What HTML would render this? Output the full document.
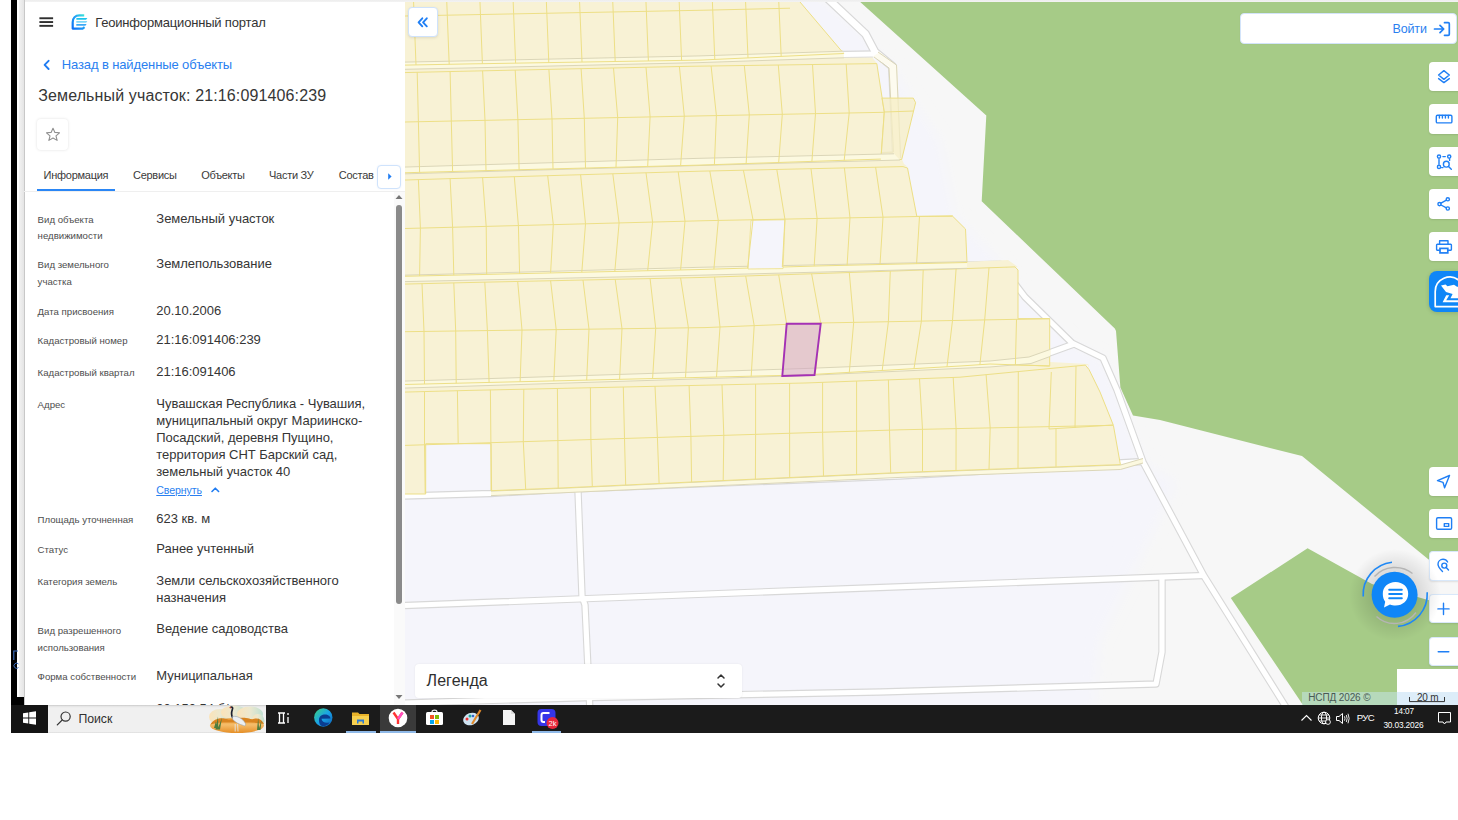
<!DOCTYPE html>
<html><head><meta charset="utf-8">
<style>
*{box-sizing:border-box;margin:0;padding:0}
html,body{width:1458px;height:820px;overflow:hidden;background:#fff;font-family:"Liberation Sans",sans-serif;position:relative}
.abs{position:absolute}
#blackbar{left:11px;top:0;width:13px;height:705px;background:#000}
#graystrip{left:17px;top:0;width:8px;height:697px;background:linear-gradient(90deg,#fff 0,#fff 2px,#f2f2f2 2px,#e6e6e6 6.5px,#c2c2c2 7px,#c2c2c2 8px)}
#panel{left:24px;top:0;width:381px;height:705px;background:#fff;overflow:hidden;box-shadow:inset 1px 0 0 #c8c8c8}
#topline{left:25px;top:0;width:1433px;height:2px;background:linear-gradient(#ededed,#f3f3f3)}
.t{position:absolute;white-space:nowrap;line-height:1}
.lab{font-size:10px;color:#4a4a4a;position:absolute;white-space:nowrap;line-height:17px;letter-spacing:-0.05px}
.val{font-size:13px;color:#2d2d2d;position:absolute;white-space:nowrap;line-height:17px}
#taskbar{left:11px;top:705px;width:1447px;height:28px;background:#1b1b1b}
.mbtn{position:absolute;left:1428.5px;width:30px;height:29.5px;background:#fff;border-radius:4px 0 0 4px;box-shadow:0 1px 2px rgba(0,0,0,.10)}
.mbtn svg{position:absolute;left:0;top:0}
</style></head><body>
<div id="blackbar" class="abs"></div>
<div id="graystrip" class="abs"></div>
<div class="abs" id="bluefrag" style="left:12.5px;top:649px;width:6px;height:20px;overflow:hidden"><svg width="6" height="20"><path d="M0.8 11 V2 H5" fill="none" stroke="#3b6fc4" stroke-width="1.1"/><path d="M5.5 15 A2.6 2.6 0 1 0 5.5 18.5" fill="none" stroke="#3b6fc4" stroke-width="1"/></svg></div>
<svg class="abs" style="left:405px;top:0" width="1053" height="705" viewBox="405 0 1053 705"><defs><filter id="bl" x="-10%" y="-10%" width="120%" height="120%"><feGaussianBlur stdDeviation="6"/></filter></defs><rect x="405" y="0" width="1053" height="705" fill="#f7f7f7"/><polygon points="405.0,0.0 823.0,0.0 865.0,34.0 875.0,52.0 892.0,66.0 910.0,95.0 940.0,140.0 955.0,215.0 1000.0,262.0 1025.0,297.0 1072.0,343.0 1103.0,358.0 1117.0,390.0 1143.0,462.0 1176.0,483.0 1140.0,560.0 1100.0,640.0 1095.0,710.0 405.0,710.0" fill="#f5f5fb" stroke="none" stroke-width="0" filter="url(#bl)"/><polygon points="405.0,0.0 815.0,0.0 860.0,40.0 868.0,55.0 885.0,70.0 890.0,150.0 980.0,262.0 1020.0,300.0 1065.0,345.0 1095.0,365.0 1110.0,395.0 1135.0,462.0 1120.0,520.0 1085.0,640.0 1080.0,710.0 405.0,710.0" fill="#f5f5fb" stroke="none" stroke-width="0" /><polygon points="858.0,0.0 1458.0,0.0 1458.0,578.0 1428.0,559.0 1302.0,456.0 1160.0,420.0 1133.0,415.5 1120.4,387.4 1116.0,331.0 1114.8,328.5 981.7,201.3 986.3,115.5" fill="#a6cb87" stroke="none" stroke-width="0" /><polygon points="1230.8,598.0 1307.6,548.3 1372.0,584.0 1428.0,600.0 1458.0,604.0 1458.0,705.0 1303.0,705.0" fill="#a6cb87" stroke="none" stroke-width="0" /><polyline points="823.0,-6.0 865.5,34.0 875.0,52.0 892.5,66.5 896.5,156.0 700.0,161.9 470.0,168.5 400.0,170.6" fill="none" stroke="#d8d8d8" stroke-width="9.0" stroke-linejoin="round" /><polyline points="875.0,54.0 843.0,54.5 700.0,59.2 470.0,64.3 400.0,65.8" fill="none" stroke="#d8d8d8" stroke-width="7.4" stroke-linejoin="round" /><polyline points="400.0,278.5 470.0,276.9 700.0,271.2 1000.0,264.2 1025.0,297.0 1072.0,343.0 1103.0,358.0 1117.0,390.0 1143.0,462.0 1204.0,576.0 1289.0,712.0" fill="none" stroke="#d8d8d8" stroke-width="7.4" stroke-linejoin="round" /><polyline points="1074.0,344.0 1029.0,360.2 990.0,364.0 805.0,372.0 470.0,382.6 400.0,384.7" fill="none" stroke="#d8d8d8" stroke-width="7.4" stroke-linejoin="round" /><polyline points="405.0,496.0 491.0,493.5 560.0,489.5 900.0,476.0 1143.0,461.5" fill="none" stroke="#d8d8d8" stroke-width="7.4" stroke-linejoin="round" /><polyline points="578.0,491.0 582.0,596.0 585.0,605.0 590.0,712.0" fill="none" stroke="#d8d8d8" stroke-width="7.4" stroke-linejoin="round" /><polyline points="405.0,605.5 880.0,587.5 1204.0,575.5" fill="none" stroke="#d8d8d8" stroke-width="7.4" stroke-linejoin="round" /><polyline points="1162.0,577.0 1162.0,652.0 1156.0,684.0 880.0,692.0 592.0,697.5 405.0,703.0" fill="none" stroke="#d8d8d8" stroke-width="7.4" stroke-linejoin="round" /><polyline points="823.0,-6.0 865.5,34.0 875.0,52.0 892.5,66.5 896.5,156.0 700.0,161.9 470.0,168.5 400.0,170.6" fill="none" stroke="#ffffff" stroke-width="6.6" stroke-linejoin="round" /><polyline points="875.0,54.0 843.0,54.5 700.0,59.2 470.0,64.3 400.0,65.8" fill="none" stroke="#ffffff" stroke-width="5.2" stroke-linejoin="round" /><polyline points="400.0,278.5 470.0,276.9 700.0,271.2 1000.0,264.2 1025.0,297.0 1072.0,343.0 1103.0,358.0 1117.0,390.0 1143.0,462.0 1204.0,576.0 1289.0,712.0" fill="none" stroke="#ffffff" stroke-width="5.2" stroke-linejoin="round" /><polyline points="1074.0,344.0 1029.0,360.2 990.0,364.0 805.0,372.0 470.0,382.6 400.0,384.7" fill="none" stroke="#ffffff" stroke-width="5.2" stroke-linejoin="round" /><polyline points="405.0,496.0 491.0,493.5 560.0,489.5 900.0,476.0 1143.0,461.5" fill="none" stroke="#ffffff" stroke-width="5.2" stroke-linejoin="round" /><polyline points="578.0,491.0 582.0,596.0 585.0,605.0 590.0,712.0" fill="none" stroke="#ffffff" stroke-width="5.2" stroke-linejoin="round" /><polyline points="405.0,605.5 880.0,587.5 1204.0,575.5" fill="none" stroke="#ffffff" stroke-width="5.2" stroke-linejoin="round" /><polyline points="1162.0,577.0 1162.0,652.0 1156.0,684.0 880.0,692.0 592.0,697.5 405.0,703.0" fill="none" stroke="#ffffff" stroke-width="5.2" stroke-linejoin="round" /><polygon points="400.0,62.2 470.0,60.8 700.0,55.9 843.0,51.2 843.7,57.8 872.2,57.5 876.8,63.3 876.8,63.6 690.0,66.3 470.0,71.1 400.0,72.7" fill="#f8f2d5" stroke="none" stroke-width="0" /><polygon points="400.0,172.9 470.0,171.0 700.0,165.1 880.0,159.1 902.0,159.5 904.0,164.0 907.5,166.5 700.0,171.2 470.0,178.0 400.0,180.2" fill="#f8f2d5" stroke="none" stroke-width="0" /><polygon points="400.0,275.3 470.0,273.5 700.0,267.3 967.0,261.7 1008.0,260.0 1018.0,267.0 1018.0,266.8 820.0,273.5 700.0,277.5 470.0,282.5 400.0,284.2" fill="#f8f2d5" stroke="none" stroke-width="0" /><polygon points="400.0,384.6 470.0,382.9 805.0,374.9 960.0,366.0 990.0,364.0 1050.0,366.0 1050.0,362.0 1088.0,364.0 1089.0,369.5 1089.0,364.7 1086.0,365.0 960.0,377.2 805.0,383.0 470.0,390.4 400.0,392.2" fill="#f8f2d5" stroke="none" stroke-width="0" /><polygon points="491.0,491.1 560.0,488.4 900.0,472.9 1120.4,465.0 1143.0,458.5 1143.0,463.0 1120.4,469.5 900.0,477.4 560.0,492.9 491.0,495.6" fill="#fcf9e0" stroke="none" stroke-width="0" /><polyline points="491.0,491.1 560.0,488.4 900.0,472.9 1120.4,465.0 1143.0,458.5" fill="none" stroke="#dbd6b8" stroke-width="1.0" stroke-linejoin="round" /><polyline points="491.0,495.6 560.0,492.9 900.0,477.4 1120.4,469.5 1143.0,463.0" fill="none" stroke="#dbd6b8" stroke-width="1.0" stroke-linejoin="round" /><polygon points="872.0,57.0 889.0,66.0 893.5,155.0 900.5,160.0 897.5,66.5 880.0,52.0" fill="#fdfbef" stroke="none" stroke-width="0" /><polyline points="874.0,57.0 889.0,68.0 893.5,152.0 880.0,153.0" fill="none" stroke="#dbd6b8" stroke-width="1.0" stroke-linejoin="round" /><polyline points="878.0,52.0 896.5,65.0 900.5,158.0" fill="none" stroke="#dbd6b8" stroke-width="1.0" stroke-linejoin="round" /><polygon points="400.0,0.0 798.3,0.0 843.7,53.5 843.7,53.5 700.0,60.1 470.0,63.9 400.0,65.2" fill="#f8f2d5" stroke="#eddf86" stroke-width="1" /><polygon points="400.0,72.7 470.0,71.1 690.0,66.3 876.8,63.6 884.3,112.0 880.9,159.5 880.9,159.1 880.0,159.1 700.0,165.1 470.0,171.0 400.0,172.9" fill="#f8f2d5" stroke="#eddf86" stroke-width="1" /><polygon points="400.0,180.2 470.0,178.0 700.0,171.2 903.0,166.6 907.5,168.0 916.8,216.3 952.7,216.3 965.5,229.0 967.0,262.5 967.0,262.5 820.0,265.9 700.0,269.5 470.0,274.8 400.0,276.4" fill="#f8f2d5" stroke="#eddf86" stroke-width="1" /><polygon points="400.0,284.2 470.0,282.5 700.0,277.5 820.0,273.5 1015.0,266.9 1018.0,270.0 1018.0,318.7 1049.7,318.7 1049.7,365.5 1049.7,366.0 990.0,364.0 960.0,366.0 805.0,374.9 470.0,382.9 400.0,384.6" fill="#f8f2d5" stroke="#eddf86" stroke-width="1" /><polygon points="400.0,392.2 470.0,390.4 805.0,383.0 960.0,377.2 1085.4,365.1 1089.0,369.5 1100.0,392.0 1113.4,425.3 1120.4,464.6 1120.4,464.6 900.0,472.5 560.0,488.0 491.0,490.7 491.0,443.7 425.7,443.7 425.7,494.0 400.0,494.0" fill="#f8f2d5" stroke="#eddf86" stroke-width="1" /><polygon points="882.0,98.1 913.3,98.1 915.6,102.7 901.7,159.5 880.9,159.5 884.3,112.0" fill="rgba(246,238,196,0.75)" stroke="#eddf86" stroke-width="1" /><polygon points="400.0,62.2 470.0,60.8 700.0,55.9 843.0,51.2 844.0,57.8 843.0,57.8 700.0,62.6 470.0,67.9 400.0,69.4" fill="#fcf9e0" stroke="none" stroke-width="0" /><polyline points="400.0,62.2 470.0,60.8 700.0,55.9 843.0,51.2" fill="none" stroke="#dbd6b8" stroke-width="1.0" stroke-linejoin="round" /><polyline points="400.0,69.4 470.0,67.9 700.0,62.6 843.0,57.8 844.0,57.8" fill="none" stroke="#dbd6b8" stroke-width="1.0" stroke-linejoin="round" /><polygon points="400.0,167.2 470.0,165.1 700.0,158.3 894.0,153.8 900.0,160.0 700.0,165.5 470.0,172.0 400.0,174.0" fill="#fcf9e0" stroke="none" stroke-width="0" /><polyline points="400.0,167.2 470.0,165.1 700.0,158.3 894.0,153.8" fill="none" stroke="#dbd6b8" stroke-width="1.0" stroke-linejoin="round" /><polyline points="400.0,174.0 470.0,172.0 700.0,165.5 900.0,160.0" fill="none" stroke="#dbd6b8" stroke-width="1.0" stroke-linejoin="round" /><polygon points="400.0,275.3 470.0,273.5 700.0,267.3 967.0,261.7 967.0,268.3 700.0,275.2 470.0,280.2 400.0,281.7" fill="#fcf9e0" stroke="none" stroke-width="0" /><polyline points="400.0,275.3 470.0,273.5 700.0,267.3 967.0,261.7" fill="none" stroke="#dbd6b8" stroke-width="1.0" stroke-linejoin="round" /><polyline points="400.0,281.7 470.0,280.2 700.0,275.2 967.0,268.3" fill="none" stroke="#dbd6b8" stroke-width="1.0" stroke-linejoin="round" /><polygon points="400.0,381.2 470.0,379.2 805.0,368.5 990.0,361.0 1029.0,357.0 1050.0,349.5 1050.0,356.5 1031.0,363.5 990.0,367.0 805.0,375.5 470.0,386.1 400.0,388.2" fill="#fcf9e0" stroke="none" stroke-width="0" /><polyline points="400.0,381.2 470.0,379.2 805.0,368.5 990.0,361.0 1029.0,357.0 1050.0,349.5" fill="none" stroke="#dbd6b8" stroke-width="1.0" stroke-linejoin="round" /><polyline points="400.0,388.2 470.0,386.1 805.0,375.5 990.0,367.0 1031.0,363.5 1050.0,356.5" fill="none" stroke="#dbd6b8" stroke-width="1.0" stroke-linejoin="round" /><polyline points="400.0,65.2 470.0,63.9 700.0,60.1 843.7,53.5" fill="none" stroke="#eddf86" stroke-width="1" stroke-linejoin="round" /><polyline points="400.0,172.9 470.0,171.0 700.0,165.1 880.0,159.1 880.9,159.1" fill="none" stroke="#eddf86" stroke-width="1" stroke-linejoin="round" /><polyline points="400.0,276.4 470.0,274.8 700.0,269.5 820.0,265.9 967.0,262.5" fill="none" stroke="#eddf86" stroke-width="1" stroke-linejoin="round" /><polyline points="400.0,384.6 470.0,382.9 805.0,374.9 960.0,366.0 990.0,364.0 1049.7,366.0" fill="none" stroke="#eddf86" stroke-width="1" stroke-linejoin="round" /><polygon points="751.0,220.3 785.0,219.8 783.0,268.6 748.0,269.0" fill="#f5f5fb" stroke="#eddf86" stroke-width="0.8" /><polyline points="405.0,16.0 705.0,10.2 790.0,8.2" fill="none" stroke="#eddf86" stroke-width="1" stroke-linejoin="round" /><polyline points="413.5,0.0 416.0,64.9" fill="none" stroke="#eddf86" stroke-width="1" stroke-linejoin="round" /><polyline points="446.7,0.0 449.2,64.3" fill="none" stroke="#eddf86" stroke-width="1" stroke-linejoin="round" /><polyline points="479.9,0.0 482.4,63.7" fill="none" stroke="#eddf86" stroke-width="1" stroke-linejoin="round" /><polyline points="513.1,0.0 515.6,63.1" fill="none" stroke="#eddf86" stroke-width="1" stroke-linejoin="round" /><polyline points="546.3,0.0 548.8,62.6" fill="none" stroke="#eddf86" stroke-width="1" stroke-linejoin="round" /><polyline points="579.5,0.0 582.0,62.0" fill="none" stroke="#eddf86" stroke-width="1" stroke-linejoin="round" /><polyline points="612.7,0.0 615.2,61.5" fill="none" stroke="#eddf86" stroke-width="1" stroke-linejoin="round" /><polyline points="645.9,0.0 648.4,61.0" fill="none" stroke="#eddf86" stroke-width="1" stroke-linejoin="round" /><polyline points="679.1,0.0 681.6,60.4" fill="none" stroke="#eddf86" stroke-width="1" stroke-linejoin="round" /><polyline points="712.3,0.0 714.8,59.4" fill="none" stroke="#eddf86" stroke-width="1" stroke-linejoin="round" /><polyline points="745.5,0.0 748.0,57.9" fill="none" stroke="#eddf86" stroke-width="1" stroke-linejoin="round" /><polyline points="778.7,0.0 781.2,56.4" fill="none" stroke="#eddf86" stroke-width="1" stroke-linejoin="round" /><polyline points="405.0,122.0 690.0,116.1 884.0,112.3 884.3,112.3" fill="none" stroke="#eddf86" stroke-width="1" stroke-linejoin="round" /><polyline points="417.2,72.3 418.4,121.7 419.6,172.4" fill="none" stroke="#eddf86" stroke-width="1" stroke-linejoin="round" /><polyline points="450.1,71.6 451.3,121.0 452.6,171.5" fill="none" stroke="#eddf86" stroke-width="1" stroke-linejoin="round" /><polyline points="482.6,70.8 485.0,120.3 486.0,170.6" fill="none" stroke="#eddf86" stroke-width="1" stroke-linejoin="round" /><polyline points="515.2,70.1 517.9,119.7 519.1,169.7" fill="none" stroke="#eddf86" stroke-width="1" stroke-linejoin="round" /><polyline points="548.9,69.4 552.0,119.0 553.0,168.9" fill="none" stroke="#eddf86" stroke-width="1" stroke-linejoin="round" /><polyline points="581.1,68.7 584.3,118.3 585.5,168.0" fill="none" stroke="#eddf86" stroke-width="1" stroke-linejoin="round" /><polyline points="613.5,68.0 617.7,117.6 616.0,167.3" fill="none" stroke="#eddf86" stroke-width="1" stroke-linejoin="round" /><polyline points="646.0,67.3 650.1,116.9 647.7,166.4" fill="none" stroke="#eddf86" stroke-width="1" stroke-linejoin="round" /><polyline points="679.4,66.5 684.3,116.2 680.6,165.6" fill="none" stroke="#eddf86" stroke-width="1" stroke-linejoin="round" /><polyline points="711.1,66.0 716.4,115.6 714.4,164.6" fill="none" stroke="#eddf86" stroke-width="1" stroke-linejoin="round" /><polyline points="744.3,65.5 749.3,114.9 746.1,163.6" fill="none" stroke="#eddf86" stroke-width="1" stroke-linejoin="round" /><polyline points="778.3,65.0 782.3,114.3 778.7,162.5" fill="none" stroke="#eddf86" stroke-width="1" stroke-linejoin="round" /><polyline points="812.5,64.5 815.5,113.6 811.9,161.4" fill="none" stroke="#eddf86" stroke-width="1" stroke-linejoin="round" /><polyline points="846.2,64.0 849.2,113.0 844.2,160.3" fill="none" stroke="#eddf86" stroke-width="1" stroke-linejoin="round" /><polyline points="884.3,112.0 914.0,111.0" fill="none" stroke="#eddf86" stroke-width="1" stroke-linejoin="round" /><polyline points="405.0,228.5 705.0,220.7 952.7,215.8" fill="none" stroke="#eddf86" stroke-width="1" stroke-linejoin="round" /><polyline points="418.4,179.6 420.4,228.1 419.6,276.0" fill="none" stroke="#eddf86" stroke-width="1" stroke-linejoin="round" /><polyline points="450.1,178.6 452.6,227.3 453.8,275.2" fill="none" stroke="#eddf86" stroke-width="1" stroke-linejoin="round" /><polyline points="482.6,177.6 486.2,226.4 486.7,274.4" fill="none" stroke="#eddf86" stroke-width="1" stroke-linejoin="round" /><polyline points="514.3,176.7 518.4,225.6 519.6,273.7" fill="none" stroke="#eddf86" stroke-width="1" stroke-linejoin="round" /><polyline points="547.7,175.7 553.3,224.6 550.6,272.9" fill="none" stroke="#eddf86" stroke-width="1" stroke-linejoin="round" /><polyline points="580.6,174.7 585.5,223.8 581.8,272.2" fill="none" stroke="#eddf86" stroke-width="1" stroke-linejoin="round" /><polyline points="612.8,173.8 619.1,222.9 614.8,271.5" fill="none" stroke="#eddf86" stroke-width="1" stroke-linejoin="round" /><polyline points="646.0,172.8 652.6,222.1 647.7,270.7" fill="none" stroke="#eddf86" stroke-width="1" stroke-linejoin="round" /><polyline points="678.2,171.8 685.0,221.2 680.6,269.9" fill="none" stroke="#eddf86" stroke-width="1" stroke-linejoin="round" /><polyline points="709.8,171.0 718.3,220.4 713.9,269.1" fill="none" stroke="#eddf86" stroke-width="1" stroke-linejoin="round" /><polyline points="743.4,170.2 753.0,219.7 747.6,268.1" fill="none" stroke="#eddf86" stroke-width="1" stroke-linejoin="round" /><polyline points="776.8,169.5 784.9,219.1 782.3,267.0" fill="none" stroke="#eddf86" stroke-width="1" stroke-linejoin="round" /><polyline points="811.0,168.7 817.1,218.5 814.2,266.1" fill="none" stroke="#eddf86" stroke-width="1" stroke-linejoin="round" /><polyline points="844.4,167.9 850.0,217.8 847.1,265.3" fill="none" stroke="#eddf86" stroke-width="1" stroke-linejoin="round" /><polyline points="875.6,167.2 883.0,217.2 880.0,264.5" fill="none" stroke="#eddf86" stroke-width="1" stroke-linejoin="round" /><polyline points="919.5,216.4 916.6,263.7" fill="none" stroke="#eddf86" stroke-width="1" stroke-linejoin="round" /><polyline points="405.0,331.7 705.0,327.6 820.0,323.0 1049.7,318.7" fill="none" stroke="#eddf86" stroke-width="1" stroke-linejoin="round" /><polyline points="422.0,283.7 424.0,331.4 424.5,384.0" fill="none" stroke="#eddf86" stroke-width="1" stroke-linejoin="round" /><polyline points="453.8,282.9 455.7,331.0 456.2,383.2" fill="none" stroke="#eddf86" stroke-width="1" stroke-linejoin="round" /><polyline points="484.8,282.2 487.4,330.6 489.1,382.4" fill="none" stroke="#eddf86" stroke-width="1" stroke-linejoin="round" /><polyline points="517.7,281.5 522.0,330.1 520.1,381.7" fill="none" stroke="#eddf86" stroke-width="1" stroke-linejoin="round" /><polyline points="550.6,280.7 556.2,329.6 553.8,380.9" fill="none" stroke="#eddf86" stroke-width="1" stroke-linejoin="round" /><polyline points="583.0,280.0 589.0,329.2 586.7,380.1" fill="none" stroke="#eddf86" stroke-width="1" stroke-linejoin="round" /><polyline points="615.2,279.3 622.0,328.7 619.6,379.3" fill="none" stroke="#eddf86" stroke-width="1" stroke-linejoin="round" /><polyline points="650.1,278.6 655.7,328.3 652.6,378.5" fill="none" stroke="#eddf86" stroke-width="1" stroke-linejoin="round" /><polyline points="680.6,277.9 688.4,327.8 685.5,377.8" fill="none" stroke="#eddf86" stroke-width="1" stroke-linejoin="round" /><polyline points="714.6,277.0 720.0,327.0 716.5,377.0" fill="none" stroke="#eddf86" stroke-width="1" stroke-linejoin="round" /><polyline points="745.7,276.0 754.2,325.6 751.2,376.2" fill="none" stroke="#eddf86" stroke-width="1" stroke-linejoin="round" /><polyline points="778.7,274.9 786.7,324.3 782.3,375.4" fill="none" stroke="#eddf86" stroke-width="1" stroke-linejoin="round" /><polyline points="811.6,273.8 820.7,323.0 815.3,374.3" fill="none" stroke="#eddf86" stroke-width="1" stroke-linejoin="round" /><polyline points="849.3,272.5 853.7,322.4 849.3,372.4" fill="none" stroke="#eddf86" stroke-width="1" stroke-linejoin="round" /><polyline points="890.3,271.1 888.4,321.7 882.2,370.5" fill="none" stroke="#eddf86" stroke-width="1" stroke-linejoin="round" /><polyline points="923.2,270.0 921.4,321.1 914.0,368.6" fill="none" stroke="#eddf86" stroke-width="1" stroke-linejoin="round" /><polyline points="956.1,268.9 952.5,320.5 947.0,366.7" fill="none" stroke="#eddf86" stroke-width="1" stroke-linejoin="round" /><polyline points="989.0,267.8 984.7,319.9 979.9,364.7" fill="none" stroke="#eddf86" stroke-width="1" stroke-linejoin="round" /><polyline points="1016.5,319.3 1015.4,364.8" fill="none" stroke="#eddf86" stroke-width="1" stroke-linejoin="round" /><polyline points="405.0,445.4 560.0,440.5 900.0,429.8 1113.0,425.3" fill="none" stroke="#eddf86" stroke-width="1" stroke-linejoin="round" /><polyline points="424.5,391.6 424.5,444.8 425.2,493.2" fill="none" stroke="#eddf86" stroke-width="1" stroke-linejoin="round" /><polyline points="457.4,390.7 458.2,443.7" fill="none" stroke="#eddf86" stroke-width="1" stroke-linejoin="round" /><polyline points="490.4,389.9 490.9,442.7 491.6,490.6" fill="none" stroke="#eddf86" stroke-width="1" stroke-linejoin="round" /><polyline points="523.8,389.2 523.3,441.7 525.7,489.3" fill="none" stroke="#eddf86" stroke-width="1" stroke-linejoin="round" /><polyline points="557.4,388.5 557.9,440.6 558.2,488.1" fill="none" stroke="#eddf86" stroke-width="1" stroke-linejoin="round" /><polyline points="590.4,387.7 590.9,439.5 592.3,486.5" fill="none" stroke="#eddf86" stroke-width="1" stroke-linejoin="round" /><polyline points="623.3,387.0 624.5,438.5 625.7,485.0" fill="none" stroke="#eddf86" stroke-width="1" stroke-linejoin="round" /><polyline points="655.0,386.3 657.4,437.4 659.1,483.5" fill="none" stroke="#eddf86" stroke-width="1" stroke-linejoin="round" /><polyline points="689.1,385.6 690.9,436.4 691.6,482.0" fill="none" stroke="#eddf86" stroke-width="1" stroke-linejoin="round" /><polyline points="722.0,384.8 723.8,435.3 723.2,480.6" fill="none" stroke="#eddf86" stroke-width="1" stroke-linejoin="round" /><polyline points="755.6,384.1 755.6,434.3 755.4,479.1" fill="none" stroke="#eddf86" stroke-width="1" stroke-linejoin="round" /><polyline points="789.6,383.3 789.6,433.3 789.7,477.5" fill="none" stroke="#eddf86" stroke-width="1" stroke-linejoin="round" /><polyline points="822.6,382.3 822.6,432.2 823.5,476.0" fill="none" stroke="#eddf86" stroke-width="1" stroke-linejoin="round" /><polyline points="856.6,381.1 856.6,431.2 856.6,474.5" fill="none" stroke="#eddf86" stroke-width="1" stroke-linejoin="round" /><polyline points="888.4,379.9 889.5,430.1 890.7,472.9" fill="none" stroke="#eddf86" stroke-width="1" stroke-linejoin="round" /><polyline points="919.5,378.7 922.5,429.3 922.5,471.7" fill="none" stroke="#eddf86" stroke-width="1" stroke-linejoin="round" /><polyline points="953.2,377.5 956.1,428.6 956.0,470.5" fill="none" stroke="#eddf86" stroke-width="1" stroke-linejoin="round" /><polyline points="986.1,374.7 990.2,427.9 989.0,469.3" fill="none" stroke="#eddf86" stroke-width="1" stroke-linejoin="round" /><polyline points="1018.3,371.6 1018.0,468.3" fill="none" stroke="#eddf86" stroke-width="1" stroke-linejoin="round" /><polyline points="1051.3,372.0 1049.0,429.0 1113.0,425.0" fill="none" stroke="#eddf86" stroke-width="1" stroke-linejoin="round" /><polyline points="1076.0,366.0 1075.0,428.0" fill="none" stroke="#eddf86" stroke-width="1" stroke-linejoin="round" /><polyline points="1056.0,428.0 1056.0,466.9" fill="none" stroke="#eddf86" stroke-width="1" stroke-linejoin="round" /><polygon points="786.7,323.8 820.7,323.8 814.5,375.0 782.3,376.0" fill="rgba(210,160,200,0.5)" stroke="#a431b6" stroke-width="1.9" /></svg>
<div id="panel" class="abs">
<svg class="abs" style="left:15.0px;top:16px" width="16" height="12"><rect x="0.4" y="1.3" width="13.7" height="1.9" fill="#2f2f2f"/><rect x="0.4" y="5.1" width="13.7" height="1.9" fill="#2f2f2f"/><rect x="0.4" y="8.9" width="13.7" height="1.9" fill="#2f2f2f"/></svg>
<svg class="abs" style="left:45.5px;top:13px" width="19" height="18" viewBox="0 0 19 18">
<defs><linearGradient id="lg" x1="0" y1="1" x2="1" y2="0"><stop offset="0" stop-color="#0f6ff5"/><stop offset="0.6" stop-color="#22a6f5"/><stop offset="1" stop-color="#3de6d8"/></linearGradient>
<linearGradient id="lg2" x1="0" y1="1" x2="1" y2="0"><stop offset="0" stop-color="#3a9cf8"/><stop offset="1" stop-color="#45e0e8"/></linearGradient></defs>
<path d="M14.2 2.4 L9.4 2.4 C5.4 2.4 2.7 5.3 2.7 9.2 L2.7 15.6 L12.6 15.6 L14.6 14.2" fill="none" stroke="url(#lg)" stroke-width="2.2" stroke-linejoin="round"/>
<path d="M6.4 4.9 H17.4 L16.1 6.8 H6.4 Z" fill="#1cc4ec"/>
<path d="M6.3 7.9 H17.3 L16.2 9.7 H6.3 Z" fill="#7fd8f8"/>
<path d="M6.3 10.9 H16.6 L15.4 12.8 H6.3 Z" fill="#3aa8f6"/>
</svg>
<div class="t" style="left:71.20px;top:16.00px;font-size:13px;line-height:13px;color:#333;letter-spacing:-0.18px;">Геоинформационный портал</div>
<svg class="abs" style="left:18.0px;top:59px" width="10" height="12"><path d="M6.6 1.8 L2.6 5.9 L6.6 10" fill="none" stroke="#1f7cf2" stroke-width="1.9" stroke-linecap="round" stroke-linejoin="round"/></svg>
<div class="t" style="left:37.70px;top:58.30px;font-size:13px;line-height:13px;color:#2a7ff0;letter-spacing:-0.11px;">Назад в найденные объекты</div>
<div class="t" style="left:14.20px;top:87.86px;font-size:16px;line-height:16px;color:#363636;letter-spacing:0.13px;">Земельный участок: 21:16:091406:239</div>
<div class="abs" style="left:13.3px;top:119px;width:30.5px;height:30.5px;background:#fff;border-radius:4px;box-shadow:0 0 3px rgba(0,0,0,.13)"></div>
<svg class="abs" style="left:20.5px;top:127px" width="16" height="15" viewBox="0 0 16 15"><path d="M8 1.2 L9.9 5.4 L14.5 5.8 L11 8.8 L12.1 13.4 L8 11 L3.9 13.4 L5 8.8 L1.5 5.8 L6.1 5.4 Z" fill="none" stroke="#8f8f8f" stroke-width="1.1" stroke-linejoin="round"/></svg>
<div class="t" style="left:19.60px;top:170.09px;font-size:11px;line-height:11px;color:#3a3a3a;letter-spacing:-0.27px;">Информация</div>
<div class="t" style="left:109.00px;top:170.09px;font-size:11px;line-height:11px;color:#3a3a3a;letter-spacing:-0.27px;">Сервисы</div>
<div class="t" style="left:177.20px;top:170.09px;font-size:11px;line-height:11px;color:#3a3a3a;letter-spacing:-0.27px;">Объекты</div>
<div class="t" style="left:245.00px;top:170.09px;font-size:11px;line-height:11px;color:#3a3a3a;letter-spacing:-0.27px;">Части ЗУ</div>
<div class="t" style="left:314.80px;top:170.09px;font-size:11px;line-height:11px;color:#3a3a3a;letter-spacing:-0.27px;">Состав</div>
<div class="abs" style="left:13.3px;top:188.6px;width:77.4px;height:2.2px;background:#2a86f5"></div>
<div class="abs" style="left:0;top:190.8px;width:381px;height:1px;background:#efefef"></div>
<div class="abs" style="left:353.4px;top:165px;width:24px;height:23.5px;border:1px solid #cfe3fc;border-radius:4px;background:#fff;box-shadow:0 0 2px rgba(0,80,200,.08)"></div>
<svg class="abs" style="left:363.2px;top:172px" width="6" height="9"><path d="M1.2 1.2 L4.6 4.5 L1.2 7.8 Z" fill="#1f7cf2"/></svg>
<div class="abs" style="left:370.0px;top:192px;width:11px;height:513px;background:#fafafa"></div>
<svg class="abs" style="left:371.0px;top:194px" width="8" height="6"><path d="M0.5 5 L4 1 L7.5 5 Z" fill="#777"/></svg>
<div class="abs" style="left:372.0px;top:205px;width:6px;height:399px;background:#8a8a8a;border-radius:3px"></div>
<svg class="abs" style="left:371.0px;top:694px" width="8" height="6"><path d="M0.5 1 L4 5 L7.5 1 Z" fill="#777"/></svg>
<div class="t" style="left:13.60px;top:215.03px;font-size:9.65px;line-height:9.65px;color:#4d4d4d;letter-spacing:0px;">Вид объекта</div>
<div class="t" style="left:13.60px;top:231.23px;font-size:9.65px;line-height:9.65px;color:#4d4d4d;letter-spacing:0px;">недвижимости</div>
<div class="t" style="left:132.30px;top:212.20px;font-size:13px;line-height:13px;color:#353535;letter-spacing:-0.02px;">Земельный участок</div>
<div class="t" style="left:13.60px;top:260.23px;font-size:9.65px;line-height:9.65px;color:#4d4d4d;letter-spacing:0px;">Вид земельного</div>
<div class="t" style="left:13.60px;top:277.13px;font-size:9.65px;line-height:9.65px;color:#4d4d4d;letter-spacing:0px;">участка</div>
<div class="t" style="left:132.30px;top:257.40px;font-size:13px;line-height:13px;color:#353535;letter-spacing:-0.02px;">Землепользование</div>
<div class="t" style="left:13.60px;top:306.53px;font-size:9.65px;line-height:9.65px;color:#4d4d4d;letter-spacing:0px;">Дата присвоения</div>
<div class="t" style="left:132.30px;top:303.70px;font-size:13px;line-height:13px;color:#353535;letter-spacing:-0.02px;">20.10.2006</div>
<div class="t" style="left:13.60px;top:335.93px;font-size:9.65px;line-height:9.65px;color:#4d4d4d;letter-spacing:0px;">Кадастровый номер</div>
<div class="t" style="left:132.30px;top:332.70px;font-size:13px;line-height:13px;color:#353535;letter-spacing:-0.02px;">21:16:091406:239</div>
<div class="t" style="left:13.60px;top:367.93px;font-size:9.65px;line-height:9.65px;color:#4d4d4d;letter-spacing:0px;">Кадастровый квартал</div>
<div class="t" style="left:132.30px;top:364.70px;font-size:13px;line-height:13px;color:#353535;letter-spacing:-0.02px;">21:16:091406</div>
<div class="t" style="left:13.60px;top:399.83px;font-size:9.65px;line-height:9.65px;color:#4d4d4d;letter-spacing:0px;">Адрес</div>
<div class="t" style="left:132.30px;top:397.00px;font-size:13px;line-height:13px;color:#353535;letter-spacing:-0.02px;">Чувашская Республика - Чувашия,</div>
<div class="t" style="left:132.30px;top:414.00px;font-size:13px;line-height:13px;color:#353535;letter-spacing:-0.02px;">муниципальный округ Мариинско-</div>
<div class="t" style="left:132.30px;top:431.00px;font-size:13px;line-height:13px;color:#353535;letter-spacing:-0.02px;">Посадский, деревня Пущино,</div>
<div class="t" style="left:132.30px;top:448.00px;font-size:13px;line-height:13px;color:#353535;letter-spacing:-0.02px;">территория СНТ Барский сад,</div>
<div class="t" style="left:132.30px;top:465.00px;font-size:13px;line-height:13px;color:#353535;letter-spacing:-0.02px;">земельный участок 40</div>
<div class="t" style="left:132.30px;top:485.43px;font-size:10.6px;line-height:10.6px;color:#2a7ff0;letter-spacing:-0.1px;text-decoration:underline;">Свернуть</div>
<svg class="abs" style="left:186.0px;top:485px" width="11" height="9"><path d="M2 6.5 L5.3 3.2 L8.6 6.5" fill="none" stroke="#1f7cf2" stroke-width="1.6" stroke-linecap="round" stroke-linejoin="round"/></svg>
<div class="t" style="left:13.60px;top:515.03px;font-size:9.65px;line-height:9.65px;color:#4d4d4d;letter-spacing:0px;">Площадь уточненная</div>
<div class="t" style="left:132.30px;top:512.20px;font-size:13px;line-height:13px;color:#353535;letter-spacing:-0.02px;">623 кв. м</div>
<div class="t" style="left:13.60px;top:544.53px;font-size:9.65px;line-height:9.65px;color:#4d4d4d;letter-spacing:0px;">Статус</div>
<div class="t" style="left:132.30px;top:541.70px;font-size:13px;line-height:13px;color:#353535;letter-spacing:-0.02px;">Ранее учтенный</div>
<div class="t" style="left:13.60px;top:576.53px;font-size:9.65px;line-height:9.65px;color:#4d4d4d;letter-spacing:0px;">Категория земель</div>
<div class="t" style="left:132.30px;top:573.70px;font-size:13px;line-height:13px;color:#353535;letter-spacing:-0.02px;">Земли сельскохозяйственного</div>
<div class="t" style="left:132.30px;top:591.00px;font-size:13px;line-height:13px;color:#353535;letter-spacing:-0.02px;">назначения</div>
<div class="t" style="left:13.60px;top:626.23px;font-size:9.65px;line-height:9.65px;color:#4d4d4d;letter-spacing:0px;">Вид разрешенного</div>
<div class="t" style="left:13.60px;top:642.53px;font-size:9.65px;line-height:9.65px;color:#4d4d4d;letter-spacing:0px;">использования</div>
<div class="t" style="left:132.30px;top:622.20px;font-size:13px;line-height:13px;color:#353535;letter-spacing:-0.02px;">Ведение садоводства</div>
<div class="t" style="left:13.60px;top:671.83px;font-size:9.65px;line-height:9.65px;color:#4d4d4d;letter-spacing:0px;">Форма собственности</div>
<div class="t" style="left:132.30px;top:669.00px;font-size:13px;line-height:13px;color:#353535;letter-spacing:-0.02px;">Муниципальная</div>
<div class="t" style="left:132.30px;top:702.00px;font-size:13px;line-height:13px;color:#353535;letter-spacing:-0.02px;">00.150.54 б/н</div>
</div>
<div id="topline" class="abs"></div>
<div class="abs" style="left:408px;top:7px;width:30px;height:29.6px;background:#fff;border:1px solid #cfe2fb;border-radius:4px;box-shadow:0 1px 3px rgba(0,0,0,.10)"></div>
<svg class="abs" style="left:416px;top:16px" width="14" height="14" viewBox="0 0 14 14"><path d="M6.3 2.3 L2.6 6.3 L6.3 10.3 M10.8 2.3 L7.1 6.3 L10.8 10.3" fill="none" stroke="#1f7ff5" stroke-width="1.9" stroke-linecap="round" stroke-linejoin="round"/></svg>
<div class="abs" style="left:1240.2px;top:13.3px;width:217.3px;height:31.2px;background:#fff;border:1px solid #d3e4fa;border-radius:4px;box-shadow:0 0 2px rgba(0,0,0,.06)"></div>
<div class="t" style="left:1392.40px;top:22.62px;font-size:12.5px;color:#2a7ff0;letter-spacing:-0.1px;">Войти</div>
<svg class="abs" style="left:1433px;top:21px" width="18" height="16" viewBox="0 0 18 16"><path d="M1.5 8 L10.5 8 M7 4.3 L10.7 8 L7 11.7" fill="none" stroke="#1f7ff5" stroke-width="1.7" stroke-linecap="round" stroke-linejoin="round"/><path d="M11.5 1.7 L15.2 1.7 Q16.3 1.7 16.3 2.8 L16.3 13.2 Q16.3 14.3 15.2 14.3 L11.5 14.3" fill="none" stroke="#1f7ff5" stroke-width="1.7" stroke-linecap="round"/></svg>
<div class="mbtn" style="top:62.0px;height:29.4px;background:#fff;"><svg style="" width="30" height="29" viewBox="0 0 30 29"><path d="M9.6 13 L14.9 8.6 L20.3 13 L14.9 17.4 Z" fill="none" stroke="#1f7ff5" stroke-width="1.4" stroke-linecap="round" stroke-linejoin="round" stroke-width="1.6"/><path d="M9.6 16.6 L14.9 20.6 L20.3 16.6" fill="none" stroke="#1f7ff5" stroke-width="1.4" stroke-linecap="round" stroke-linejoin="round" stroke-width="1.6"/></svg></div>
<div class="mbtn" style="top:104.4px;height:29.3px;background:#fff;"><svg style="" width="30" height="29" viewBox="0 0 30 29"><rect x="7.3" y="11.3" width="15.6" height="7.6" rx="1.2" fill="none" stroke="#1f7ff5" stroke-width="1.4" stroke-linecap="round" stroke-linejoin="round" stroke-width="1.7"/><path d="M10.4 11.5 V14.1 M13.4 11.5 V14.1 M16.4 11.5 V14.1 M19.4 11.5 V14.1" fill="none" stroke="#1f7ff5" stroke-width="1.4" stroke-linecap="round" stroke-linejoin="round" stroke-width="1.3" stroke-linecap="butt"/></svg></div>
<div class="mbtn" style="top:147.0px;height:29.3px;background:#fff;"><svg style="" width="30" height="29" viewBox="0 0 30 29"><circle cx="10" cy="9.6" r="1.6" fill="none" stroke="#1f7ff5" stroke-width="1.4" stroke-linecap="round" stroke-linejoin="round" stroke-width="1.2"/><circle cx="20.2" cy="9.6" r="1.6" fill="none" stroke="#1f7ff5" stroke-width="1.4" stroke-linecap="round" stroke-linejoin="round" stroke-width="1.2"/><circle cx="10" cy="19.9" r="1.6" fill="none" stroke="#1f7ff5" stroke-width="1.4" stroke-linecap="round" stroke-linejoin="round" stroke-width="1.2"/><path d="M13.9 9.6 H16.3 M10 12.4 V17.2 M12.6 20.6 H14 M20.6 12.2 V13.4" fill="none" stroke="#1f7ff5" stroke-width="1.4" stroke-linecap="round" stroke-linejoin="round" stroke-width="1.2"/><circle cx="17.3" cy="17.2" r="2.9" fill="none" stroke="#1f7ff5" stroke-width="1.4" stroke-linecap="round" stroke-linejoin="round" stroke-width="1.3"/><path d="M19.5 19.5 L22.3 22.2" fill="none" stroke="#1f7ff5" stroke-width="1.4" stroke-linecap="round" stroke-linejoin="round" stroke-width="1.4"/></svg></div>
<div class="mbtn" style="top:189.3px;height:29.4px;background:#fff;"><svg style="" width="30" height="29" viewBox="0 0 30 29"><circle cx="18.8" cy="10.3" r="1.6" fill="none" stroke="#1f7ff5" stroke-width="1.4" stroke-linecap="round" stroke-linejoin="round" stroke-width="1.3"/><circle cx="10.5" cy="15.1" r="1.6" fill="none" stroke="#1f7ff5" stroke-width="1.4" stroke-linecap="round" stroke-linejoin="round" stroke-width="1.3"/><circle cx="18.8" cy="19.5" r="1.6" fill="none" stroke="#1f7ff5" stroke-width="1.4" stroke-linecap="round" stroke-linejoin="round" stroke-width="1.3"/><path d="M12 14.2 L17.4 11.1 M12 16 L17.4 18.8" fill="none" stroke="#1f7ff5" stroke-width="1.4" stroke-linecap="round" stroke-linejoin="round" stroke-width="1.4"/></svg></div>
<div class="mbtn" style="top:231.9px;height:29.6px;background:#fff;"><svg style="" width="30" height="30" viewBox="0 0 30 30"><path d="M10.6 12.2 V8.7 H19 V12.2" fill="none" stroke="#1f7ff5" stroke-width="1.4" stroke-linecap="round" stroke-linejoin="round" stroke-width="1.7" stroke-linecap="butt"/><path d="M10.4 18.3 H8.2 Q7.6 18.3 7.6 17.6 V13 Q7.6 12.2 8.4 12.2 H21.6 Q22.4 12.2 22.4 13 V17.6 Q22.4 18.3 21.8 18.3 H19.4" fill="none" stroke="#1f7ff5" stroke-width="1.4" stroke-linecap="round" stroke-linejoin="round" stroke-width="1.7"/><rect x="11" y="16.4" width="7.8" height="4.5" fill="#fff" stroke="#1f7ff5" stroke-width="1.7"/></svg></div>
<div class="abs" style="left:1428.5px;top:270.5px;width:30px;height:41.8px;background:#0f86f7;border-radius:8px 0 0 8px;box-shadow:0 1px 4px rgba(0,0,0,.15)"><svg width="30" height="42" viewBox="0 0 30 42"><path d="M30.5 9.9 A14.5 14.5 0 0 0 6.2 20.5 L6.2 35.6 L31 35.6" fill="none" stroke="#fff" stroke-width="1.7" stroke-linejoin="round"/><path d="M12 14.6 L16.5 13.6 L18.5 15.2 L25 13.8 L28 15.8 L30 15.5 L30 27.2 L21.5 27.2 L23.6 23 L17 21 Z" fill="#fff"/><path d="M17.2 24.2 L20.2 24.2 L17.2 29.2 L30 29.2 L30 31.3 L13.6 31.3 Z" fill="#fff"/></svg></div>
<div class="mbtn" style="top:466.5px;height:29.5px;background:#fff;"><svg style="" width="30" height="30" viewBox="0 0 30 30"><path d="M20.5 8.5 L8.5 13.7 L14 15.3 L15.6 20.8 Z" fill="none" stroke="#1f7ff5" stroke-width="1.4" stroke-linecap="round" stroke-linejoin="round" stroke-width="1.5"/></svg></div>
<div class="mbtn" style="top:509.4px;height:29.0px;background:#fff;"><svg style="" width="30" height="29" viewBox="0 0 30 29"><rect x="7.6" y="8.7" width="15" height="11.5" rx="1.3" fill="none" stroke="#1f7ff5" stroke-width="1.4" stroke-linecap="round" stroke-linejoin="round" stroke-width="1.7"/><rect x="15.3" y="14.6" width="4.4" height="2.8" fill="none" stroke="#1f7ff5" stroke-width="1.4" stroke-linecap="round" stroke-linejoin="round" stroke-width="1.4"/></svg></div>
<div class="mbtn" style="top:551.2px;height:29.9px;background:#fff;border:1px solid #d9e8fa;border-right:none;"><svg style="left:-1px;top:-1px;" width="30" height="30" viewBox="0 0 30 30"><path d="M13.5 20.5 C10.5 17.5 9 15.5 9 13.3 C9 10.4 11.3 8.3 14 8.3 C16.2 8.3 17.8 9.5 18.6 11" fill="none" stroke="#1f7ff5" stroke-width="1.4" stroke-linecap="round" stroke-linejoin="round" stroke-width="1.5"/><circle cx="15.3" cy="14.6" r="2.5" fill="none" stroke="#1f7ff5" stroke-width="1.4" stroke-linecap="round" stroke-linejoin="round" stroke-width="1.4"/><path d="M17.2 16.6 L19.5 19" fill="none" stroke="#1f7ff5" stroke-width="1.4" stroke-linecap="round" stroke-linejoin="round" stroke-width="1.5"/></svg></div>
<div class="mbtn" style="top:593.6px;height:29.7px;background:#fff;border:1px solid #d9e8fa;border-right:none;"><svg style="left:-1px;top:-1px;" width="30" height="30" viewBox="0 0 30 30"><path d="M14.5 9.3 V20.6 M8.9 14.9 H20.1" fill="none" stroke="#1f7ff5" stroke-width="1.4" stroke-linecap="round" stroke-linejoin="round" stroke-width="1.9"/></svg></div>
<div class="mbtn" style="top:637.0px;height:29.2px;background:#fff;border:1px solid #d9e8fa;border-right:none;"><svg style="left:-1px;top:-1px;" width="30" height="29" viewBox="0 0 30 29"><path d="M9.2 14.8 H19.8" fill="none" stroke="#1f7ff5" stroke-width="1.4" stroke-linecap="round" stroke-linejoin="round" stroke-width="1.9"/></svg></div>
<div class="abs" style="left:1397px;top:669.3px;width:61px;height:23px;background:#fff"></div>
<div class="abs" style="left:1301.6px;top:691.8px;width:95.4px;height:13.2px;background:rgba(190,225,215,.65)"></div>
<div class="abs" style="left:1397px;top:691.8px;width:61px;height:13.2px;background:#ddedf9"></div>
<div class="t" style="left:1308.20px;top:692.74px;font-size:10px;color:#4a5a55;letter-spacing:-0.12px;">НСПД 2026 ©</div>
<div class="t" style="left:1417.00px;top:692.74px;font-size:10px;color:#333;letter-spacing:-0.2px;">20 m</div>
<svg class="abs" style="left:1408px;top:696px" width="40" height="8"><path d="M1.5 1 V5.6 H36.5 V1" fill="none" stroke="#333" stroke-width="1"/></svg>
<svg class="abs" style="left:1345px;top:545px" width="100" height="100" viewBox="0 0 100 100">
<defs><radialGradient id="sh" cx="0.5" cy="0.5" r="0.5"><stop offset="0.45" stop-color="#000" stop-opacity="0.13"/><stop offset="1" stop-color="#000" stop-opacity="0"/></radialGradient></defs>
<circle cx="50" cy="50" r="46" fill="url(#sh)"/>
<path d="M47 17.3 A32.4 32.4 0 0 0 18.2 51.5" fill="none" stroke="#1f88f5" stroke-width="1.6"/>
<path d="M82.2 47.3 A32.4 32.4 0 0 1 53 81.4" fill="none" stroke="#1f88f5" stroke-width="1.6"/>
<path d="M29.5 31.5 A28 28 0 0 1 67.5 28.5" fill="none" stroke="#b5b5b5" stroke-width="1.4"/>
<path d="M31.5 71.5 A26.5 26.5 0 0 0 71 67.5" fill="none" stroke="#b5b5b5" stroke-width="1.4"/>
<circle cx="49.6" cy="49.8" r="23" fill="#0f86f7"/>
<path d="M50.5 37 C57.8 37 63.2 42 63.2 48.8 C63.2 55.6 57.8 60.6 50.5 60.6 C48.5 60.6 46.6 60.3 45 59.5 L39 62.5 L40.2 56.8 C38.6 54.8 37.8 52 37.8 48.8 C37.8 42 43.2 37 50.5 37 Z" fill="#fff"/>
<path d="M44.2 44.8 H56.8 M44.2 49 H56.8 M44.2 53.2 H56.8" stroke="#0f86f7" stroke-width="2" stroke-linecap="round"/>
</svg>
<div class="abs" style="left:414.9px;top:664.3px;width:327.4px;height:33.4px;background:#fff;border-radius:4px;box-shadow:0 0 2px rgba(0,0,0,.08)"></div>
<div class="t" style="left:426.60px;top:673.36px;font-size:16px;color:#2f2f2f;letter-spacing:0.05px;">Легенда</div>
<svg class="abs" style="left:715px;top:672px" width="12" height="18"><path d="M3 6 L6 3 L9 6 M3 12 L6 15 L9 12" fill="none" stroke="#333" stroke-width="1.5" stroke-linecap="round" stroke-linejoin="round"/></svg>
<div id="taskbar" class="abs">
<div class="abs" style="left:0.00px;top:0.00px;width:36.80px;height:28.00px;background:#141414"></div>
<svg class="abs" style="left:11.00px;top:6.00px" width="15" height="14" viewBox="0 0 15 14"><path d="M1 2.2 L6.3 1.4 V6.5 H1 Z M7.2 1.3 L14 0.3 V6.5 H7.2 Z M1 7.4 H6.3 V12.5 L1 11.8 Z M7.2 7.4 H14 V13.7 L7.2 12.7 Z" fill="#fff"/></svg>
<div class="abs" style="left:36.80px;top:0.00px;width:218.70px;height:28.00px;background:linear-gradient(#c9c9c9 0,#e6e6e6 1.5px,#f0f0f0 3px,#f0f0f0 26.5px,#dcdcdc 28px)"></div>
<svg class="abs" style="left:45.00px;top:5.00px" width="16" height="17" viewBox="0 0 16 17"><circle cx="9.6" cy="6.6" r="4.6" fill="none" stroke="#333" stroke-width="1.2"/><path d="M6.3 9.9 L1.3 14.9" stroke="#333" stroke-width="1.3" stroke-linecap="round"/></svg>
<div class="t" style="left:67.60px;top:8.09px;font-size:12.3px;color:#303030;letter-spacing:-0.1px;">Поиск</div>
<svg class="abs" style="left:194.00px;top:0.00px" width="62" height="29" viewBox="0 0 62 29"><defs><linearGradient id="cl" x1="0" y1="0" x2="1" y2="0"><stop offset="0" stop-color="#fbe3b8"/><stop offset="0.5" stop-color="#ece8cf"/><stop offset="1" stop-color="#bfe0d2"/></linearGradient>
<linearGradient id="gr" x1="0" y1="0" x2="0" y2="1"><stop offset="0" stop-color="#e9962c"/><stop offset="0.45" stop-color="#f5bd6b"/><stop offset="1" stop-color="#e58e25"/></linearGradient></defs>
<g fill="url(#cl)"><ellipse cx="15" cy="12" rx="11" ry="8"/><ellipse cx="29" cy="7.5" rx="13" ry="7"/><ellipse cx="45" cy="9" rx="13" ry="7.5"/><ellipse cx="53" cy="16" rx="6.5" ry="7"/></g>
<ellipse cx="32" cy="20.5" rx="27" ry="7.6" fill="url(#gr)"/>
<path d="M5.5 19.5 C9 13 17 11.5 24 15 C31 12.5 40 11.5 47 14.5 C52 12 57 14 59 19 C50 17 40 17.5 32 17.5 C22 17.5 12 17 5.5 19.5 Z" fill="#d98420"/>
<path d="M10.5 24.5 L13 11.5 L13.4 24.5 Z M12.5 24.5 L17 12.5 L15 24.5 Z M9 23 L11 16 L12 23 Z" fill="#4e7d3e"/>
<path d="M52 25 L53.2 13 L54.2 25 Z M53.5 25 L56.5 15 L55.5 25 Z" fill="#4e7d3e"/>
<path d="M25.6 2.3 C27 1.5 28.2 2.5 27.4 4.2 C26.4 7 26 10 27.8 13.2" fill="none" stroke="#1c2130" stroke-width="1.7"/>
<circle cx="25.3" cy="2.6" r="0.8" fill="#c0392b"/>
<path d="M27.5 11.5 C32 10.5 38 13.5 40.6 18.8 C41 20.5 39.6 21.6 38.3 20.4 C35 19.5 30 17.5 27.6 14.2 Z" fill="#eceff2" stroke="#8f969e" stroke-width="0.5"/>
<path d="M30.2 19 V26.5 M32.6 19 L33 26.5" stroke="#e4e4e4" stroke-width="0.9"/></svg>
<svg class="abs" style="left:265.00px;top:5.00px" width="16" height="16" viewBox="0 0 16 16"><path d="M2 3 H9 M2 13 H9 M3.5 3 V13 M7.5 3 V13 M12 3 V5 M12 7 V13" fill="none" stroke="#fff" stroke-width="1.3"/></svg>
<svg class="abs" style="left:302.00px;top:3.00px" width="21" height="19" viewBox="0 0 21 19"><defs><linearGradient id="eg" x1="0" y1="0" x2="1" y2="1"><stop offset="0" stop-color="#3bd37a"/><stop offset="0.5" stop-color="#1aa4e8"/><stop offset="1" stop-color="#0b5fb8"/></linearGradient></defs>
<circle cx="10.3" cy="9.5" r="9.2" fill="url(#eg)"/><path d="M6 12 C6 8 9 6.5 12 6.5 C15 6.5 17.5 8.5 17.5 10.5 L8.5 10.8 C9 14 12 15.5 16.5 14.5 C15 17 12.5 18.3 10 18.3 C7 18 6 15 6 12Z" fill="#0a3d91"/></svg>
<svg class="abs" style="left:340.00px;top:5.00px" width="19" height="16" viewBox="0 0 19 16"><path d="M1 2.5 H7 L8.5 4 H18 V15 H1 Z" fill="#e8b229"/><rect x="1" y="6" width="17" height="9" fill="#f7d04f"/><rect x="6" y="9.5" width="7" height="4" fill="#2b7bd6"/><rect x="7.5" y="11.5" width="4" height="2.5" fill="#f7d04f"/></svg>
<div class="abs" style="left:334.70px;top:26.00px;width:30.30px;height:2.00px;background:#8fb9e8"></div>
<div class="abs" style="left:369.00px;top:0.00px;width:35.60px;height:28.00px;background:#3a3a3a"></div>
<svg class="abs" style="left:377.00px;top:3.00px" width="20" height="20" viewBox="0 0 20 20"><circle cx="10" cy="10" r="9.3" fill="#fff"/><path d="M5.5 4.5 L10 11 L14.5 4.5 M10 11 V16" fill="none" stroke="#f33" stroke-width="2.4" stroke-linejoin="round"/><path d="M14.5 4.5 L10 11" stroke="#ff4fc3" stroke-width="2.4"/></svg>
<div class="abs" style="left:369.00px;top:26.00px;width:35.60px;height:2.00px;background:#8fb9e8"></div>
<svg class="abs" style="left:414.00px;top:3.00px" width="19" height="18" viewBox="0 0 19 18"><path d="M7 4 C7 1.5 12 1.5 12 4" fill="none" stroke="#eee" stroke-width="1.2"/><rect x="1" y="4" width="17" height="13" rx="1.5" fill="#fff"/><rect x="5" y="7" width="4" height="4" fill="#f35325"/><rect x="10" y="7" width="4" height="4" fill="#81bc06"/><rect x="5" y="12" width="4" height="4" fill="#05a6f0"/><rect x="10" y="12" width="4" height="4" fill="#ffba08"/></svg>
<svg class="abs" style="left:451.00px;top:4.00px" width="20" height="17" viewBox="0 0 20 17"><ellipse cx="9" cy="10" rx="8" ry="6" fill="#cfe3f2" transform="rotate(-20 9 10)"/><circle cx="5" cy="10" r="1.5" fill="#e33"/><circle cx="8" cy="7" r="1.5" fill="#2a9"/><circle cx="11" cy="7" r="1.3" fill="#36c"/><path d="M18.5 1 L10 15" stroke="#e08a2c" stroke-width="2.2"/></svg>
<svg class="abs" style="left:491.00px;top:4.00px" width="14" height="17" viewBox="0 0 14 17"><path d="M1 1 H9 L13 5 V16 H1 Z" fill="#f4f4f4"/><path d="M9 1 V5 H13" fill="#ddd"/></svg>
<svg class="abs" style="left:525.00px;top:3.00px" width="24" height="22" viewBox="0 0 24 22"><rect x="1.5" y="1" width="18" height="17" rx="4" fill="#3535e8"/><path d="M13.5 5 H7.5 Q5.5 5 5.5 7 V12 Q5.5 14 7.5 14 H9" fill="none" stroke="#fff" stroke-width="2"/><circle cx="16.5" cy="15" r="6" fill="#e8283c"/><text x="16.5" y="17.6" font-family="Liberation Sans" font-size="7.5" fill="#fff" text-anchor="middle">2k</text></svg>
<div class="abs" style="left:520.50px;top:26.00px;width:29.90px;height:2.00px;background:#8fb9e8"></div>
<svg class="abs" style="left:1289.00px;top:8.00px" width="13" height="9" viewBox="0 0 13 9"><path d="M1.5 7.5 L6.5 2.5 L11.5 7.5" fill="none" stroke="#fff" stroke-width="1.1"/></svg>
<svg class="abs" style="left:1306.00px;top:6.00px" width="15" height="15" viewBox="0 0 15 15"><circle cx="7" cy="7" r="5.8" fill="none" stroke="#fff" stroke-width="1"/><ellipse cx="7" cy="7" rx="2.6" ry="5.8" fill="none" stroke="#fff" stroke-width="1"/><path d="M1.2 7 H12.8 M2 4 H12 M2 10 H12" stroke="#fff" stroke-width="0.9"/><circle cx="11" cy="11" r="2.4" fill="#1b1b1b" stroke="#fff" stroke-width="0.9"/></svg>
<svg class="abs" style="left:1324.00px;top:6.00px" width="15" height="15" viewBox="0 0 15 15"><path d="M1.5 5.5 H4 L7.5 2.5 V12.5 L4 9.5 H1.5 Z" fill="none" stroke="#fff" stroke-width="1"/><path d="M9.5 5.3 Q10.5 7.5 9.5 9.7 M11.3 4 Q13 7.5 11.3 11 M13 2.7 Q15.3 7.5 13 12.3" fill="none" stroke="#fff" stroke-width="0.9"/></svg>
<div class="t" style="left:1345.70px;top:8.47px;font-size:9.6px;color:#fff;letter-spacing:-0.6px;">РУС</div>
<div class="t" style="left:1383.00px;top:2.86px;font-size:8.2px;color:#fff;letter-spacing:-0.1px;">14:07</div>
<div class="t" style="left:1372.40px;top:16.27px;font-size:8.3px;color:#fff;letter-spacing:-0.15px;">30.03.2026</div>
<svg class="abs" style="left:1426.00px;top:6.00px" width="15" height="15" viewBox="0 0 15 15"><path d="M1.5 1.5 H13.5 V11 H9 L7.5 13 L6 11 H1.5 Z" fill="none" stroke="#fff" stroke-width="1"/></svg>
</div>
</body></html>
